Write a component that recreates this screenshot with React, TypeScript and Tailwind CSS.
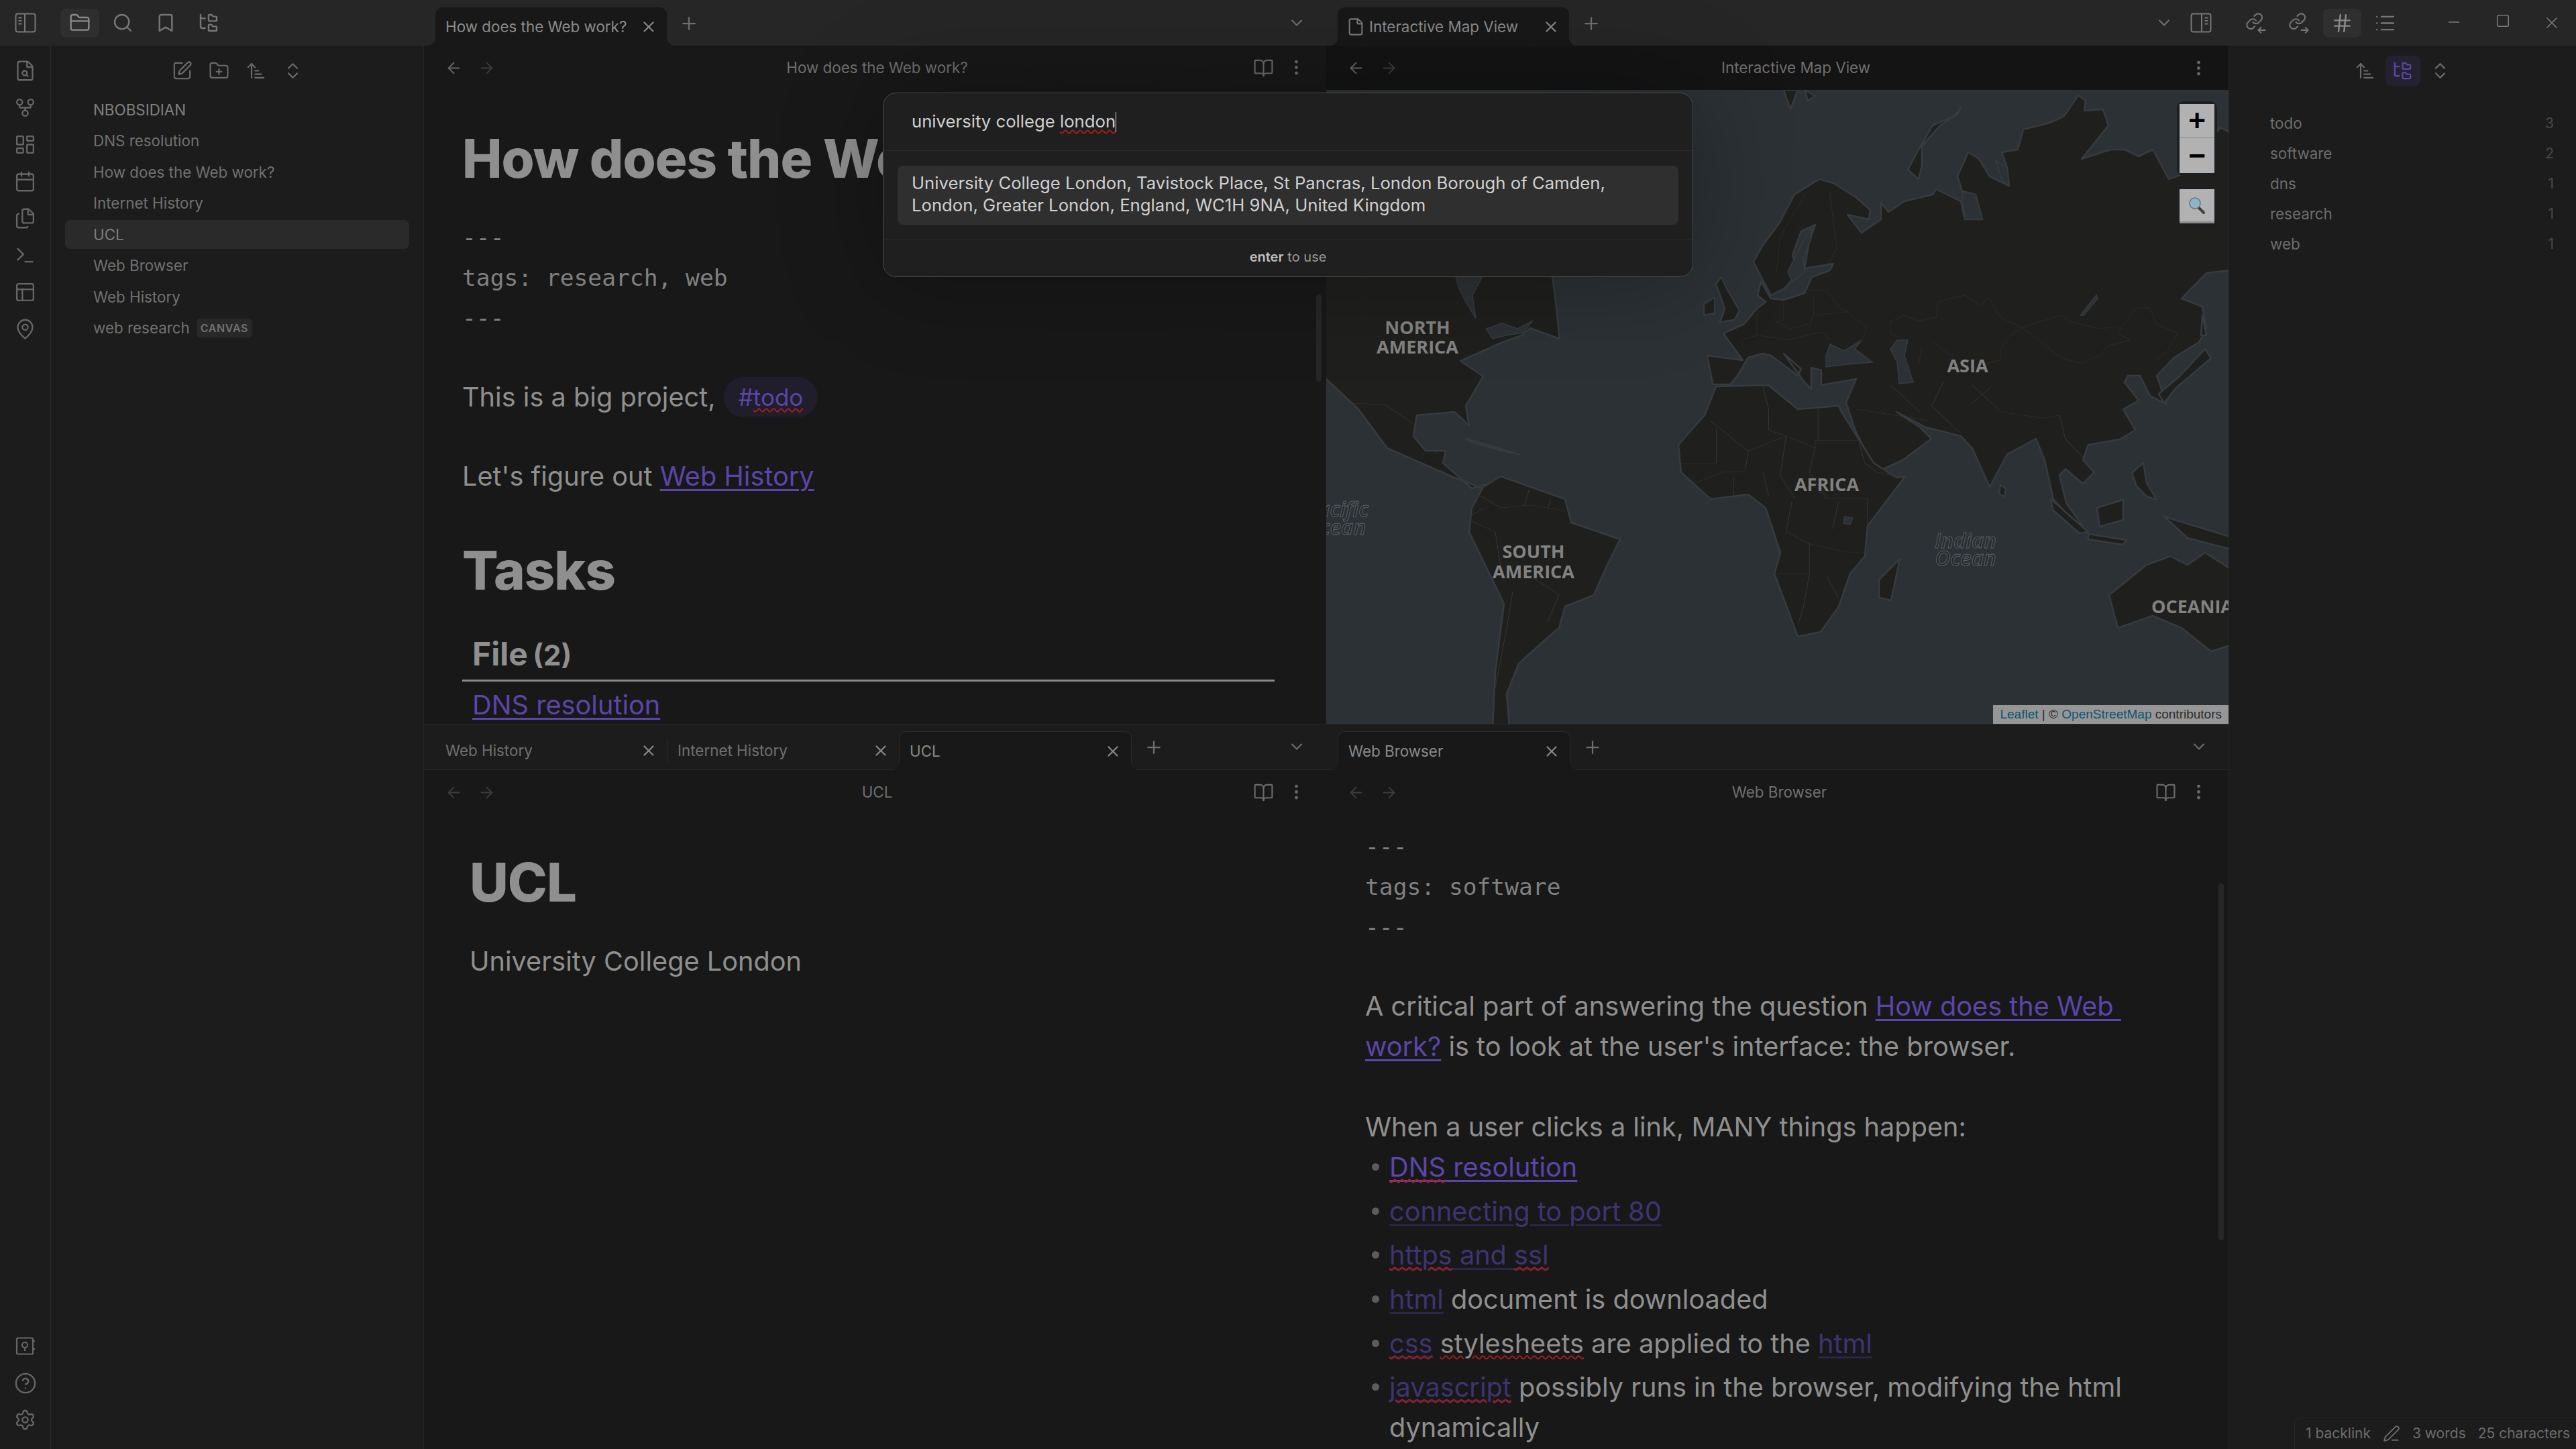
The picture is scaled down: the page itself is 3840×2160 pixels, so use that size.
import React from "react";
import {
  ArrowLeft,
  ArrowRight,
  ArrowUpNarrowWide,
  Bookmark,
  BookOpen,
  Calendar,
  ChevronDown,
  ChevronsUpDown,
  EllipsisVertical,
  File,
  Files,
  FileSearch,
  FolderClosed,
  FolderPlus,
  FolderTree,
  GitFork,
  Hash,
  LayoutDashboard,
  List,
  MapPin,
  Minus,
  PanelsTopLeft,
  PenLine,
  Plus,
  Search,
  Settings,
  Square,
  SquarePen,
  Terminal,
  CircleHelp,
  X,
} from "lucide-react";

const fileRows = [
  "DNS resolution",
  "How does the Web work?",
  "Internet History",
  "UCL",
  "Web Browser",
  "Web History",
];

const tagRows = [
  ["todo", "3"],
  ["software", "2"],
  ["dns", "1"],
  ["research", "1"],
  ["web", "1"],
];

function SidebarToggle({ right }: { right?: boolean }) {
  return (
    <svg width="32" height="32" viewBox="0 0 32 32" fill="none" stroke="currentColor" strokeWidth="2" className={right ? "-scale-x-100" : ""}>
      <rect x="1.5" y="2.5" width="29" height="27" rx="3" />
      <path d="M15 3v26M5.5 8.5h5M5.5 13h5M5.5 17.5h5" />
    </svg>
  );
}

function VaultIcon() {
  return (
    <svg width="30" height="30" viewBox="0 0 30 30" fill="none" stroke="currentColor" strokeWidth="2.2">
      <rect x="2" y="2.5" width="24" height="24" rx="1.5" />
      <circle cx="14" cy="13" r="4" />
      <path d="M14 17v5M27 7h2M27 19h2" />
    </svg>
  );
}

function LinkArrow({ out }: { out?: boolean }) {
  return (
    <svg width="32" height="32" viewBox="0 0 28 28" fill="none" stroke="currentColor" strokeWidth="1.8" strokeLinecap="round" strokeLinejoin="round">
      <path d="M10 13a5 5 0 0 0 7.54.54l3-3a5 5 0 0 0-7.07-7.07l-1.72 1.71" />
      <path d="M14 11a5 5 0 0 0-7.54-.54l-3 3a5 5 0 0 0 7.07 7.07l1.71-1.71" />
      {out ? <path d="M17 23.5h9M22.500 20l3.500 3.500l-3.500 3.500" /> : <path d="M26 23.5h-9M20.500 20L17 23.500l3.500 3.500" />}
    </svg>
  );
}

function Tab({ title, active, icon }: { title: string; active?: boolean; icon?: boolean }) {
  return (
    <div className={`relative flex h-[57px] w-[345px] items-center rounded-t-[10px] pl-[15px] pr-[14px] text-[22.4px] ${active ? "bg-[#181818] text-[#8a8a8a]" : "text-[#6f6f6f]"}`}>
      {active && (
        <>
          <span className="absolute -left-[12px] bottom-0 size-[12px] bg-[radial-gradient(circle_at_0_0,transparent_12px,#181818_12px)]" />
          <span className="absolute -right-[12px] bottom-0 size-[12px] bg-[radial-gradient(circle_at_100%_0,transparent_12px,#181818_12px)]" />
        </>
      )}
      {icon && <File size={28} strokeWidth={1.8} className="mr-[6px] -ml-[2px] text-[#777]" />}
      <span className="flex-1 truncate">{title}</span>
      <X size={26} strokeWidth={2} className="text-[#888]" />
    </div>
  );
}

function ViewHeader({ title, book = true, dim }: { title: string; book?: boolean; dim?: boolean }) {
  return (
    <div className="flex h-[66px] shrink-0 items-center text-[22.4px] text-[#6f6f6f]">
      <div className={`flex w-[124px] shrink-0 pl-[20px] ${dim ? "text-[#3d3d3d]" : "text-[#666]"}`}>
        <span className="flex w-[49px] justify-center">
          <ArrowLeft size={27} strokeWidth={1.7} />
        </span>
        <span className="flex w-[49px] justify-center text-[#3d3d3d]">
          <ArrowRight size={27} strokeWidth={1.7} />
        </span>
      </div>
      <div className="flex-1 text-center">{title}</div>
      <div className="flex shrink-0 justify-end pr-[20px] text-[#6a6a6a]">
        {book && (
          <span className="flex w-[49px] justify-center">
            <BookOpen size={31} strokeWidth={1.7} />
          </span>
        )}
        <span className="flex w-[49px] justify-center">
          <EllipsisVertical size={29} strokeWidth={2} />
        </span>
      </div>
    </div>
  );
}

function Link({ children, dim }: { children: React.ReactNode; dim?: boolean }) {
  return (
    <a className={`underline underline-offset-[5px] decoration-[3px] ${dim ? "text-[#3d3470] decoration-[#2a2648]" : "text-[#5b45a8] decoration-[#5b45a8]"}`}>
      {children}
    </a>
  );
}

function Typo({ children }: { children: React.ReactNode }) {
  return <span className="underline decoration-wavy decoration-[#a81d1d] decoration-[1.5px] underline-offset-[3px]">{children}</span>;
}

function Bullet({ children }: { children: React.ReactNode }) {
  return (
    <li className="relative pl-[36px]">
      <span className="absolute left-[10px] top-[24px] size-[11px] rounded-full bg-[#5c5c5c]" />
      {children}
    </li>
  );
}

function WorldMap() {
  const land = "#1f1f1d";
  const sea = "#2c3135";
  return (
    <svg viewBox="1977 134 1345 945" className="block h-full w-full">
      <rect x="1977" y="134" width="1345" height="945" fill={sea} />
      <g fill={land} stroke="#363b3f" strokeWidth="2.500" strokeLinejoin="round">
        {/* eurasia */}
        <path d="M2614 390L2627 367L2654 330L2675 290L2712 267L2733 273L2765 293L2788 313L2786 327L2754 320L2775 347L2804 327L2804 302L2815 316L2839 300L2881 290L2886 282L2923 300L2929 327L2955 327L2945 290L2925 285L2918 263L2934 227L2950 237L2966 263L2995 277L2992 250L2984 227L3008 223L3016 193L3056 183L3077 173L3098 142L3109 150L3107 165L3135 163L3143 187L3103 237L3146 223L3167 223L3188 233L3209 223L3220 243L3233 267L3252 260L3280 225L3310 190L3323 197L3323 403L3289 407L3252 445L3283 457L3289 490L3278 510L3241 533L3215 560L3230 603L3205 590L3190 560L3172 560L3167 570L3188 597L3165 610L3183 641L3160 655L3113 663L3105 686L3122 704L3105 721L3079 699L3070 708L3080 750L3105 784L3085 770L3061 744L3048 686L3035 654L2992 677L2966 726L2940 668L2923 650L2871 637L2827 614L2862 637L2879 654L2836 686L2797 704L2765 640L2752 600L2762 576L2767 565L2715 574L2715 552L2700 548L2700 580L2690 570L2659 527L2685 550L2680 560L2640 530L2627 527L2606 533L2590 560L2579 573L2553 573L2545 530L2598 537L2569 497L2600 483L2619 460L2632 450L2620 440L2625 420L2640 445L2659 447L2690 437L2701 413L2728 403L2733 393L2690 400L2697 360L2706 335L2685 345L2672 380L2680 407L2660 430L2640 440L2628 418Z" />
        {/* africa */}
        <path d="M2558 576L2636 574L2680 610L2741 605L2745 614L2793 690L2827 712L2840 710L2784 784L2780 829L2758 855L2741 904L2714 942L2680 949L2645 855L2654 824L2632 757L2606 737L2550 744L2506 704L2502 663L2541 619Z" />
        {/* north america */}
        <path d="M1970 380L2310 380L2320 458L2325 505L2281 489L2268 500L2240 510L2177 538L2211 561L2185 605L2190 634L2168 614L2112 619L2107 650L2125 672L2155 672L2151 690L2194 728L2220 721L2215 730L2168 712L2068 668L2025 610L1977 565L1970 560Z" />
        {/* south america */}
        <path d="M2211 726L2237 710L2333 744L2342 779L2415 804L2394 846L2376 887L2333 904L2324 936L2303 954L2264 989L2246 1034L2250 1085L2225 1085L2229 1002L2242 900L2190 793L2194 757Z" />
        {/* australia and islands */}
        <path d="M3200 842L3235 829L3261 842L3287 824L3330 851L3330 960L3296 971L3252 936L3209 918L3157 936L3144 887Z" />
        <path d="M3226 770L3330 802L3330 820L3261 802Z" />
        <path d="M3126 757L3165 745L3165 775L3130 785Z" />
        <path d="M3057 744L3113 793L3100 795L3060 760Z" />
        <path d="M3113 796L3170 805L3165 812L3113 804Z" />
        <path d="M2832 833L2819 895L2801 891L2801 864Z" />
        <path d="M2982 723L2990 728L2988 740L2980 736Z" />
        <path d="M3178 705L3195 690L3200 720L3215 745L3200 740L3185 725Z" />
        <path d="M3287 520L3296 534L3243 579L3226 601L3218 587L3250 560Z" />
        <path d="M3283 470L3289 500L3281 500Z" />
        <path d="M2566 413L2574 430L2593 463L2585 477L2564 480L2571 460L2558 423Z" />
        <path d="M2540 453L2556 443L2556 467L2540 470Z" />
        <path d="M2923 160L2913 173L2881 187L2860 223L2844 253L2860 267L2865 247L2865 217L2892 187L2918 170Z" />
        <path d="M2659 134L2669 163L2680 134ZM2690 134L2706 143L2695 150Z" />
        <path d="M2185 654L2264 677L2240 672L2195 660Z" />
      </g>
      <g fill={sea} stroke="#363b3f" strokeWidth="1.500">
        <path d="M2828 507L2844 507L2839 530L2852 570L2831 572L2828 540L2818 520Z" />
        <path d="M2728 513L2749 523L2775 507L2765 520L2791 540L2754 543L2722 547L2722 530Z" />
        <path d="M2170 412L2210 412L2195 440L2200 475L2185 450L2175 430Z" />
        <path d="M2690 355L2700 340L2700 355L2688 385L2690 405L2672 420L2665 405Z" />
        <path d="M3125 440L3101 470L3106 470L3127 445Z" />
        <path d="M2945 290L2955 327L2929 327L2925 285Z" />
        <path d="M2750 770L2762 772L2758 782L2748 780Z" />
        <path d="M2995 277L2992 250L2975 240L2985 270Z" />
        <path d="M2215 490L2240 482L2262 490L2285 478L2270 496L2245 500L2225 505Z" />
      </g>
      {/* borders traced over the reference, in crop coordinates */}
      <g transform="translate(1960 400) scale(0.8673 0.4464)" fill="none" stroke="#3b3431" strokeWidth="1.200">
        <path d="M770 395L780 470L780 540L810 560L860 600L860 575L935 575M865 470L865 575M680 510L745 610L810 560M690 535L690 650L630 650M745 610L740 670M810 560L800 690L825 770M860 600L850 680L880 770L950 770M935 575L945 650L965 680L1010 700M820 780L810 880L850 920L850 1020L790 1020M850 920L920 950L945 950M900 780L890 870M950 770L950 860M850 1020L840 1130L830 1190M880 1030L900 1100M650 720L700 680L740 680M720 700L720 770M770 680L780 760" />
        <path d="M285 760L320 800L370 790L430 810M265 840L310 880L320 1000L380 1040L420 1090L400 1180M340 1080L330 1200L310 1400M370 730L360 790M405 770L400 810M265 830L290 800" />
        <path d="M930 470L1060 510M990 390L1040 480M1080 380L1060 460L1110 550M1130 390L1180 480L1250 500L1280 490L1290 570L1330 650M1160 400L1130 450M60 450L120 455L170 520L210 620" />
      </g>
      <g transform="translate(2500 130) scale(0.5294 0.3333)" fill="none" stroke="#3b3431" strokeWidth="1.200">
        <path d="M600 1050L640 1020L680 1045L730 1030L735 960L810 930L850 975L880 945L910 1030L970 1075L1010 1120L1080 1210L1140 1235L1190 1200L1210 1160L1275 1130L1240 1100L1260 1060L1290 990L1330 985L1350 1060L1410 1100L1380 1180L1350 1220M970 1075L1080 1020L1110 1050L1190 1080L1250 1070M600 1050L600 1100L640 1130M970 1075L940 1110L910 1170L910 1220L860 1240M690 1160L680 1240M720 1140L780 1210" />
        <path d="M300 950L300 1040L280 1050L320 1080L370 1060M385 930L385 1010L370 1080M385 1020L480 1005L535 1075L520 1130M360 905L420 910L460 990L480 1005M225 990L225 1110L180 1130M230 1110L310 1130L410 1095L430 1130M85 1230L105 1320M360 480L290 670L280 830M430 470L440 600L450 720L420 800" />
      </g>
      <g textAnchor="middle" fontFamily="Open Sans, sans-serif" className="fill-[#828282] text-[27px] font-bold">
        <text x="2113" y="498">NORTH</text>
        <text x="2113" y="527">AMERICA</text>
        <text x="2286" y="832">SOUTH</text>
        <text x="2286" y="862">AMERICA</text>
        <text x="2933" y="555">ASIA</text>
        <text x="2723" y="732">AFRICA</text>
        <text x="3207" y="914" textAnchor="start">OCEANIA</text>
      </g>
      <g fontFamily="Open Sans, sans-serif" fontStyle="italic" className="fill-[#25292c] text-[31.5px] font-semibold" stroke="#5a6065" strokeWidth="1">
        <text x="2040" y="770" textAnchor="end">Pacific</text>
        <text x="2036" y="797" textAnchor="end">Ocean</text>
        <text x="2930" y="817" textAnchor="middle">Indian</text>
        <text x="2930" y="843" textAnchor="middle">Ocean</text>
      </g>
    </svg>
  );
}

export default function App() {
  return (
    <div className="relative flex h-[2160px] w-[3840px] overflow-hidden bg-[#181818] font-[Inter,sans-serif] text-[39.7px] text-[#8f8f8f]">
      {/* left column */}
      <div className="flex w-[632px] shrink-0 flex-col bg-[#1c1c1c]">
        <div className="flex h-[68px] shrink-0 items-center bg-[#262626] text-[#767676]">
          <div className="mr-[12px] flex w-[75px] justify-center">
            <SidebarToggle />
          </div>
          <div className="flex h-[43px] w-[64px] items-center justify-center">
            <div className="flex h-[43px] w-[58px] items-center justify-center rounded-[8px] bg-[#2f2f2f] text-[#8a8a8a]">
              <FolderClosed size={32} strokeWidth={1.8} />
            </div>
          </div>
          <div className="flex w-[64px] justify-center">
            <Search size={32} strokeWidth={1.8} />
          </div>
          <div className="flex w-[64px] justify-center">
            <Bookmark size={32} strokeWidth={1.8} />
          </div>
          <div className="flex w-[64px] justify-center">
            <FolderTree size={32} strokeWidth={1.8} />
          </div>
        </div>
        <div className="flex min-h-0 flex-1">
          <div className="flex w-[76px] shrink-0 flex-col justify-between border-r-[1px] border-[#2a2a2a] pb-[16px] pt-[10px] text-[#666]">
            <div className="flex flex-col">
              {[FileSearch, GitFork, LayoutDashboard, Calendar, Files, Terminal, PanelsTopLeft, MapPin].map((Icon, i) => (
                <span key={i} className="flex h-[55px] items-center justify-center">
                  <Icon size={33} strokeWidth={1.7} />
                </span>
              ))}
            </div>
            <div className="flex flex-col">
              <span className="flex h-[55px] items-center justify-center">
                <VaultIcon />
              </span>
              <span className="flex h-[55px] items-center justify-center">
                <CircleHelp size={34} strokeWidth={1.7} />
              </span>
              <span className="flex h-[55px] items-center justify-center">
                <Settings size={33} strokeWidth={1.7} />
              </span>
            </div>
          </div>
          <div className="flex flex-1 flex-col border-r-[1px] border-[#262626] px-[21px] text-[22.4px] text-[#707070]">
            <div className="flex h-[74px] shrink-0 items-center justify-center text-[#6a6a6a]">
              <span className="flex w-[55px] justify-center">
                <SquarePen size={31} strokeWidth={1.7} />
              </span>
              <span className="flex w-[55px] justify-center">
                <FolderPlus size={31} strokeWidth={1.7} />
              </span>
              <span className="flex w-[55px] justify-center">
                <ArrowUpNarrowWide size={31} strokeWidth={1.7} />
              </span>
              <span className="flex w-[55px] justify-center">
                <ChevronsUpDown size={31} strokeWidth={1.7} />
              </span>
            </div>
            <div className="flex flex-col gap-[3.500px]">
              <div className="flex h-[43px] items-center pl-[42px] text-[#808080]">NBOBSIDIAN</div>
              {fileRows.map((name) => (
                <div key={name} className={`flex h-[43px] items-center rounded-[8px] pl-[42px] ${name === "UCL" ? "bg-[#2a2a2a] text-[#7c7c7c]" : ""}`}>
                  {name}
                </div>
              ))}
              <div className="flex h-[43px] items-center pl-[42px]">
                web research
                <span className="ml-[10px] rounded-[5px] bg-[#282828] px-[6px] py-[2px] text-[16px] font-semibold tracking-[0.6px] text-[#707070]">CANVAS</span>
              </div>
            </div>
          </div>
        </div>
      </div>

      {/* panes */}
      <div className="grid w-[2690px] shrink-0 grid-cols-2 grid-rows-[1079px_1081px]">
        {/* top left pane */}
        <div className="flex min-h-0 flex-col overflow-hidden">
          <div className="flex h-[68px] shrink-0 items-end bg-[#262626] pl-[17px]">
            <Tab title="How does the Web work?" active />
            <Plus size={30} strokeWidth={1.8} className="mb-[18px] ml-[18px] text-[#6f6f6f]" />
            <ChevronDown size={28} strokeWidth={1.8} className="mb-[20px] ml-auto mr-[30px] text-[#6f6f6f]" />
          </div>
          <ViewHeader title="How does the Web work?" />
          <div className="relative min-h-0 flex-1 pl-[57px] pr-[77px]">
            <div className="absolute right-[7px] top-[305px] h-[130px] w-[8px] rounded-full bg-[#272727]" />
            <h1 className="mt-[54px] whitespace-nowrap text-[79.5px] font-extrabold leading-[96px] tracking-[-1px]">How does the Web work?</h1>
            <div className="mt-[40px] font-['DejaVu_Sans_Mono',monospace] text-[34.6px] font-light leading-[60px] text-[#808080]">
              <p>---</p>
              <p>tags: research, web</p>
              <p>---</p>
            </div>
            <p className="mt-[58px] flex h-[60px] items-center whitespace-pre leading-[60px]">
              This is a big project,
              <span className="ml-[12px] inline-flex h-[60px] items-center rounded-[30px] bg-[#201e2a] px-[22px] text-[35px] text-[#5b45a8]">
                #<Typo>todo</Typo>
              </span>
            </p>
            <p className="mt-[58px] leading-[60px]">
              Let's figure out <Link>Web History</Link>
            </p>
            <h1 className="mt-[62px] text-[79.5px] font-extrabold leading-[96px] tracking-[-1px]">Tasks</h1>
            <div className="mt-[47px] h-[71px] border-b-[3px] border-[#8a8a8a] pl-[15px] text-[48px] font-bold leading-[60px]">
              File <span className="-ml-[4px] text-[42px]">(2)</span>
            </div>
            <p className="mt-[5px] pl-[15px] leading-[60px]">
              <Link>DNS resolution</Link>
            </p>
          </div>
        </div>

        {/* map pane */}
        <div className="flex min-h-0 flex-col overflow-hidden">
          <div className="flex h-[68px] shrink-0 items-end bg-[#262626] pl-[17px]">
            <Tab title="Interactive Map View" active icon />
            <Plus size={30} strokeWidth={1.8} className="mb-[18px] ml-[18px] text-[#6f6f6f]" />
            <ChevronDown size={28} strokeWidth={1.800} className="mb-[20px] ml-auto mr-[25px] text-[#6f6f6f]" />
            <div className="mb-[18px] mr-[25px] text-[#767676]">
              <SidebarToggle right />
            </div>
          </div>
          <div className="bg-[#141414]">
            <ViewHeader title="Interactive Map View" book={false} />
          </div>
          <div className="relative min-h-0 flex-1">
            <WorldMap />
            <div className="absolute right-[21px] top-[21px] flex flex-col rounded-[6px] shadow-[0_0_0_4px_#1c1f22]">
              <div className="flex h-[51px] w-[52px] items-center justify-center border-b-[1px] border-[#8c8c8c] bg-[#b2b2b2] font-['Liberation_Sans',sans-serif] text-[44px] font-bold text-black">+</div>
              <div className="flex h-[52px] w-[52px] items-center justify-center bg-[#b2b2b2] font-['Liberation_Sans',sans-serif] text-[44px] font-bold text-black">−</div>
            </div>
            <div className="absolute right-[21px] top-[148px] flex h-[51px] w-[52px] items-center justify-center border-b-[3px] border-[#8c8c8c] bg-[#b2b2b2] shadow-[0_0_0_4px_#1c1f22]">
              <svg width="26" height="26" viewBox="0 0 26 26">
                <path d="M15 16l8 8" stroke="#3d4247" strokeWidth="4" strokeLinecap="round" />
                <circle cx="10" cy="10" r="8" fill="#8db4c8" stroke="#6f7478" strokeWidth="1.500" />
              </svg>
            </div>
            <div className="absolute bottom-0 right-0 flex h-[28px] items-center whitespace-pre bg-[#969696] px-[10px] font-['Liberation_Sans',sans-serif] text-[19px] text-[#2b2b2b]">
              <span className="text-[#0d5471]">Leaflet</span>
              <span> | © </span>
              <span className="text-[#0d5471]">OpenStreetMap</span>
              <span> contributors</span>
            </div>
          </div>
        </div>

        {/* bottom left pane */}
        <div className="flex min-h-0 flex-col overflow-hidden border-t-[1px] border-[#262626]">
          <div className="flex h-[68px] shrink-0 items-end border-b-[1px] border-[#2a2a2a] bg-[#1c1c1c] pl-[17px]">
            <Tab title="Web History" />
            <div className="mb-[10px] h-[36px] w-px self-end bg-[#2a2a2a]" />
            <Tab title="Internet History" />
            <div className="-mb-px rounded-t-[10px] border-x-[1px] border-t-[1px] border-[#2a2a2a]">
              <Tab title="UCL" active />
            </div>
            <Plus size={30} strokeWidth={1.8} className="mb-[18px] ml-[18px] text-[#6f6f6f]" />
            <ChevronDown size={28} strokeWidth={1.8} className="mb-[20px] ml-auto mr-[30px] text-[#6f6f6f]" />
          </div>
          <ViewHeader title="UCL" dim />
          <div className="min-h-0 flex-1 pl-[68px]">
            <h1 className="mt-[53px] text-[79.5px] font-extrabold leading-[96px] tracking-[-1px]">UCL</h1>
            <p className="mt-[40px] leading-[60px]">University College London</p>
          </div>
        </div>

        {/* bottom right pane */}
        <div className="flex min-h-0 flex-col overflow-hidden border-t-[1px] border-[#262626]">
          <div className="flex h-[68px] shrink-0 items-end border-b-[1px] border-[#2a2a2a] bg-[#1c1c1c] pl-[17px]">
            <div className="-mb-px rounded-t-[10px] border-x-[1px] border-t-[1px] border-[#2a2a2a]">
              <Tab title="Web Browser" active />
            </div>
            <Plus size={30} strokeWidth={1.8} className="mb-[18px] ml-[18px] text-[#6f6f6f]" />
            <ChevronDown size={28} strokeWidth={1.8} className="mb-[20px] ml-auto mr-[30px] text-[#6f6f6f]" />
          </div>
          <ViewHeader title="Web Browser" dim />
          <div className="relative min-h-0 flex-1 pl-[58px]">
            <div className="absolute right-[7px] top-[103px] h-[532px] w-[8px] rounded-full bg-[#272727]" />
            <div className="mt-[18px] font-['DejaVu_Sans_Mono',monospace] text-[34.6px] font-light leading-[60px] text-[#808080]">
              <p>---</p>
              <p>tags: software</p>
              <p>---</p>
            </div>
            <p className="mt-[58px] w-[1200px] leading-[60px]">
              A critical part of answering the question{" "}
              <Link>
                How does the Web&nbsp;
                <wbr />
                work?
              </Link>{" "}
              is to look at the user's interface: the browser.
            </p>
            <p className="mt-[60px] leading-[60px]">When a user clicks a link, MANY things happen:</p>
            <ul className="flex w-[1200px] flex-col gap-[5.700px] leading-[60px]">
              <Bullet>
                <Link>
                  <Typo>DNS</Typo> resolution
                </Link>
              </Bullet>
              <Bullet>
                <Link dim>connecting to port 80</Link>
              </Bullet>
              <Bullet>
                <Link dim>
                  <Typo>https</Typo> and <Typo>ssl</Typo>
                </Link>
              </Bullet>
              <Bullet>
                <Link dim>html</Link> document is downloaded
              </Bullet>
              <Bullet>
                <Link dim>
                  <Typo>css</Typo>
                </Link>{" "}
                <Typo>stylesheets</Typo> are applied to the <Link dim>html</Link>
              </Bullet>
              <Bullet>
                <Link dim>
                  <Typo>javascript</Typo>
                </Link>{" "}
                possibly runs in the browser, modifying the html dynamically
              </Bullet>
            </ul>
          </div>
        </div>
      </div>

      {/* right column */}
      <div className="relative flex flex-1 flex-col border-l-[1px] border-[#262626] bg-[#1c1c1c]">
        <div className="flex h-[68px] shrink-0 items-center bg-[#262626] pl-[8px] text-[#767676]">
          <span className="flex w-[64px] justify-center">
            <LinkArrow />
          </span>
          <span className="flex w-[64px] justify-center">
            <LinkArrow out />
          </span>
          <span className="flex w-[64px] justify-center">
            <span className="flex h-[43px] w-[57px] items-center justify-center rounded-[8px] bg-[#2f2f2f] text-[#8a8a8a]">
              <Hash size={33} strokeWidth={1.8} />
            </span>
          </span>
          <span className="flex w-[64px] justify-center">
            <List size={33} strokeWidth={1.8} />
          </span>
          <div className="ml-auto flex text-[#777]">
            <span className="flex w-[73px] justify-center">
              <Minus size={26} strokeWidth={1.500} />
            </span>
            <span className="flex w-[73px] justify-center">
              <Square size={22} strokeWidth={1.800} />
            </span>
            <span className="flex w-[73px] justify-center">
              <X size={28} strokeWidth={1.500} />
            </span>
          </div>
        </div>
        <div className="flex h-[74px] shrink-0 items-center justify-center text-[#6a6a6a]">
          <span className="flex w-[56px] justify-center">
            <ArrowUpNarrowWide size={31} strokeWidth={1.7} />
          </span>
          <span className="flex w-[56px] justify-center">
            <span className="flex h-[45px] w-[52px] items-center justify-center rounded-[8px] bg-[#25222f] text-[#5b45a8]">
              <FolderTree size={31} strokeWidth={1.8} />
            </span>
          </span>
          <span className="flex w-[56px] justify-center">
            <ChevronsUpDown size={31} strokeWidth={1.7} />
          </span>
        </div>
        <div className="mt-[21px] flex flex-col gap-[3px] pl-[61px] pr-[33px] text-[22.4px] text-[#6c6c6c]">
          {tagRows.map(([name, count]) => (
            <div key={name} className="flex h-[42px] items-center justify-between">
              <span>{name}</span>
              <span className="text-[21px] text-[#484848]">{count}</span>
            </div>
          ))}
        </div>
        <div className="absolute bottom-0 right-0 flex h-[47px] w-[420px] items-center gap-[18px] rounded-tl-[12px] border-l-[1px] border-t-[1px] border-[#262626] pl-[16px] text-[21px] text-[#6c6c6c]">
          <span>1 backlink</span>
          <PenLine size={26} strokeWidth={1.700} />
          <span>3 words</span>
          <span>25 characters</span>
        </div>
      </div>

      {/* location search modal */}
      <div className="absolute left-[1316px] top-[138px] flex h-[275px] w-[1208px] flex-col rounded-[20px] border-[1px] border-[#4a4a4a] bg-[#1f1f1f] text-[25.7px] text-[#cfcfcf] shadow-[0_0_150px_rgba(0,0,0,0.3)]">
        <div className="flex h-[86px] shrink-0 items-center whitespace-pre border-b-[1px] border-[#2b2b2b] pl-[42px]">
          university college <Typo>london</Typo>
          <span className="h-[30px] w-px bg-[#d8d8d8]" />
        </div>
        <div className="flex h-[132px] shrink-0 items-center border-b-[1px] border-[#2b2b2b] px-[21px]">
          <div className="flex h-[88px] w-full items-center rounded-[8px] bg-[#2f2f2f] px-[21px] pb-[3px] leading-[33px]">
            <span>
              University College London, Tavistock Place, St Pancras, London Borough of Camden,
              <br />
              London, Greater London, England, WC1H 9NA, United Kingdom
            </span>
          </div>
        </div>
        <div className="flex flex-1 items-center justify-center pb-[3px] text-[20px] text-[#9a9a9a]">
          <b className="mr-[6px] font-semibold text-[#c0c0c0]">enter</b> to use
        </div>
      </div>
    </div>
  );
}
